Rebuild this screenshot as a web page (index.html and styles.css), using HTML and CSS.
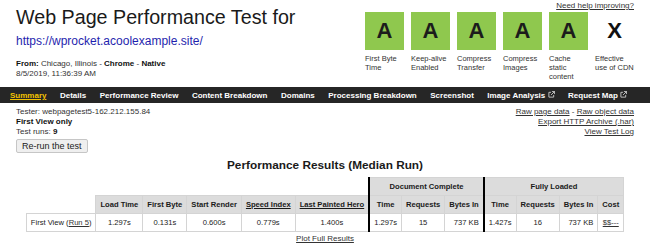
FILE: index.html
```html
<!DOCTYPE html>
<html lang="en">
<head>
<meta charset="utf-8">
<title>WebPageTest Summary</title>
<link rel="stylesheet" href="styles.css">
</head>
<body>
<header class="top">
  <div class="title-block">
    <h1 class="title">Web Page Performance Test for</h1>
    <a class="url" href="#">https://wprocket.acoolexample.site/</a>
    <div class="meta"><b>From:</b> Chicago, Illinois - <b>Chrome</b> - <b>Native</b><br>8/5/2019, 11:36:39 AM</div>
  </div>
  <div class="grades-block">
    <a class="help" href="#">Need help improving?</a>
    <ul class="grades">
      <li class="grade"><div class="grade-box">A</div><div class="grade-label">First Byte<br>Time</div></li>
      <li class="grade"><div class="grade-box">A</div><div class="grade-label">Keep-alive<br>Enabled</div></li>
      <li class="grade"><div class="grade-box">A</div><div class="grade-label">Compress<br>Transfer</div></li>
      <li class="grade"><div class="grade-box">A</div><div class="grade-label">Compress<br>Images</div></li>
      <li class="grade"><div class="grade-box">A</div><div class="grade-label">Cache<br>static<br>content</div></li>
      <li class="grade"><div class="grade-box none">X</div><div class="grade-label">Effective<br>use of CDN</div></li>
    </ul>
  </div>
</header>
<nav class="tabs">
  <a class="tab active" href="#">Summary</a>
  <a class="tab" href="#">Details</a>
  <a class="tab" href="#">Performance Review</a>
  <a class="tab" href="#">Content Breakdown</a>
  <a class="tab" href="#">Domains</a>
  <a class="tab" href="#">Processing Breakdown</a>
  <a class="tab" href="#">Screenshot</a>
  <a class="tab" href="#">Image Analysis <svg class="ext" viewBox="0 0 8 8" width="7" height="7"><path d="M3.5 1.5H1v5.5h5.5V4.5" fill="none" stroke="#cfcfcf" stroke-width="1"/><path d="M4.5 0.5h3v3M7.5 0.5L3.5 4.5" fill="none" stroke="#cfcfcf" stroke-width="1"/></svg></a>
  <a class="tab" href="#">Request Map <svg class="ext" viewBox="0 0 8 8" width="7" height="7"><path d="M3.5 1.5H1v5.5h5.5V4.5" fill="none" stroke="#cfcfcf" stroke-width="1"/><path d="M4.5 0.5h3v3M7.5 0.5L3.5 4.5" fill="none" stroke="#cfcfcf" stroke-width="1"/></svg></a>
</nav>
<section class="info">
  <div class="info-left">
    <div>Tester: webpagetest5-162.212.155.84</div>
    <div><b>First View only</b></div>
    <div>Test runs: <b>9</b></div>
    <button class="rerun" type="button">Re-run the test</button>
  </div>
  <div class="info-right">
    <div><a href="#">Raw page data</a> - <a href="#">Raw object data</a></div>
    <div><a href="#">Export HTTP Archive (.har)</a></div>
    <div><a href="#">View Test Log</a></div>
  </div>
</section>
<h2 class="results-title">Performance Results (Median Run)</h2>
<table class="results">
  <tr>
    <th class="blank" colspan="6"></th>
    <th class="sep" colspan="3">Document Complete</th>
    <th class="sep" colspan="4">Fully Loaded</th>
  </tr>
  <tr>
    <th class="blank"></th>
    <th>Load Time</th>
    <th>First Byte</th>
    <th>Start Render</th>
    <th><a href="#">Speed Index</a></th>
    <th><a href="#">Last Painted Hero</a></th>
    <th class="sep">Time</th>
    <th>Requests</th>
    <th>Bytes In</th>
    <th class="sep">Time</th>
    <th>Requests</th>
    <th>Bytes In</th>
    <th>Cost</th>
  </tr>
  <tr>
    <td>First View (<a href="#">Run 5</a>)</td>
    <td>1.297s</td>
    <td>0.131s</td>
    <td>0.600s</td>
    <td>0.779s</td>
    <td>1.400s</td>
    <td class="sep">1.297s</td>
    <td>15</td>
    <td class="num">737 KB</td>
    <td class="sep">1.427s</td>
    <td>16</td>
    <td class="num">737 KB</td>
    <td><a href="#">$$---</a></td>
  </tr>
</table>
<div class="plot"><a href="#">Plot Full Results</a></div>
</body>
</html>
```
FILE: styles.css
```css
body {
  margin: 0;
  font-family: "Liberation Sans", Arial, sans-serif;
  color: #222;
  background: #fff;
}

a { color: #333; }

.top {
  display: flex;
  justify-content: space-between;
  align-items: flex-start;
  padding: 0 16px;
  height: 87px;
  box-sizing: border-box;
}

.title {
  margin: 6px 0 0;
  font-size: 19.7px;
  line-height: 22px;
  font-weight: normal;
  color: #1a1a1a;
}

.url {
  display: block;
  margin-top: 6px;
  font-size: 12px;
  line-height: 14px;
  color: #1f1fae;
  text-decoration: none;
}

.meta {
  margin-top: 11px;
  font-size: 8px;
  line-height: 10px;
  color: #333;
}
.meta b { color: #111; }

.grades-block {
  display: flex;
  flex-direction: column;
  align-items: flex-end;
}

.help {
  margin-top: 1px;
  font-size: 8px;
  line-height: 10px;
  color: #333;
}

.grades {
  display: flex;
  gap: 7px;
  margin: 1px 0 0;
  padding: 0;
  list-style: none;
}

.grade { width: 39px; }

.grade-box {
  height: 38px;
  background: #8fc84e;
  display: flex;
  align-items: center;
  justify-content: center;
  font-size: 22px;
  font-weight: bold;
  color: #1c1c1c;
}
.grade-box.none { background: none; color: #111; }

.grade-label {
  margin-top: 4px;
  font-size: 7.5px;
  line-height: 9px;
  color: #333;
  white-space: nowrap;
}

.tabs {
  display: flex;
  align-items: center;
  gap: 13.5px;
  height: 16px;
  padding: 0 10px;
  background: #262626;
}

.tab {
  font-size: 8px;
  font-weight: bold;
  color: #fff;
  text-decoration: none;
  white-space: nowrap;
}
.tab.active {
  color: #f2c200;
  text-decoration: underline;
}
.ext { vertical-align: 0; }

.info {
  display: flex;
  justify-content: space-between;
  padding: 4px 16px 0;
  font-size: 8px;
  line-height: 10px;
  color: #333;
}
.info b { color: #111; }

.info-right { text-align: right; }

.rerun {
  display: block;
  margin-top: 2px;
  height: 14px;
  padding: 0 5px;
  font-family: "Liberation Sans", Arial, sans-serif;
  font-size: 9px;
  color: #222;
  background: #efefef;
  border: 1px solid #c6c6c6;
  border-radius: 2px;
}

.results-title {
  margin: 5px 0 0;
  text-align: center;
  font-size: 11.8px;
  line-height: 14px;
  color: #1a1a1a;
}

.results {
  margin: 5px auto 0;
  border-collapse: collapse;
  font-size: 7.6px;
}

.results th,
.results td {
  border: 1px solid #d4d4d4;
  padding: 4px 4px;
  line-height: 9px;
  text-align: center;
  white-space: nowrap;
}

.results th {
  background: #dcdcdc;
  color: #1a1a1a;
}
.results th a { color: #1a1a1a; }

.results .blank {
  background: none;
  border: none;
}

.results .sep { border-left: 2px solid #000; }
.results .num { text-align: right; }

.plot {
  margin-top: 2px;
  text-align: center;
  font-size: 8px;
  line-height: 10px;
}
```
